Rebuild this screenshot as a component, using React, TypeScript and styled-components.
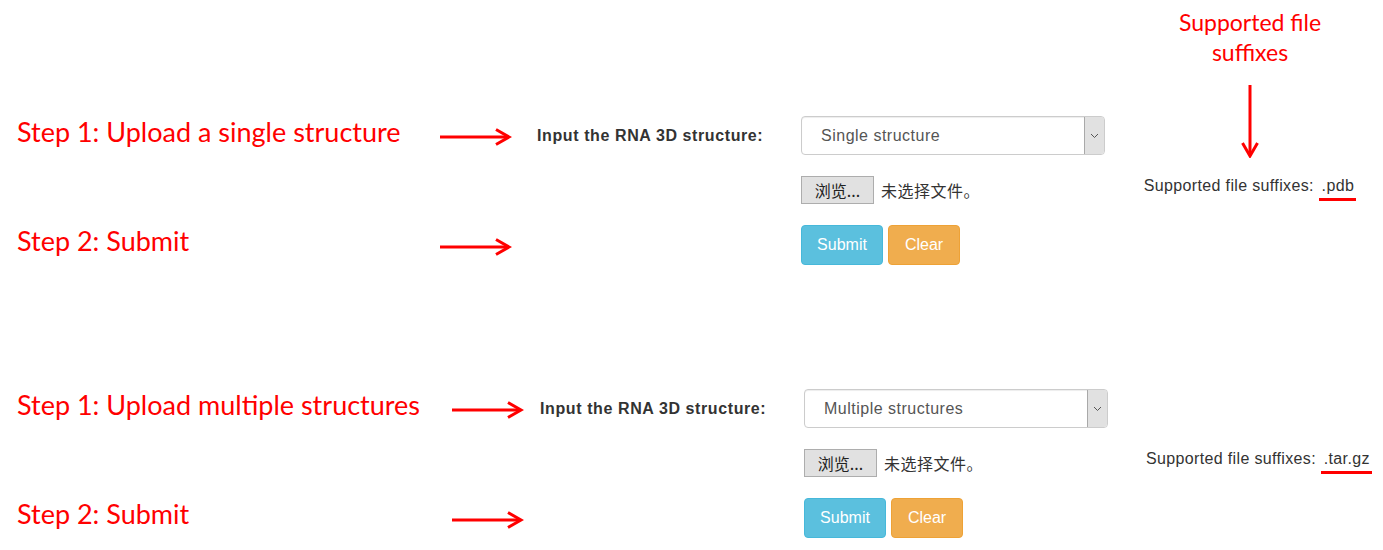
import React from "react";
import styled, { createGlobalStyle } from "styled-components";

const GlobalStyle = createGlobalStyle`
  body {
    margin: 0;
    background: #ffffff;
    font-family: "Liberation Sans", Arial, sans-serif;
  }
`;

const Page = styled.div`
  width: 1383px;
  height: 550px;
  overflow: hidden;
  display: flex;
  flex-direction: column;
`;

const Panel = styled.div<{ $cols: string; $top: number; $header?: boolean }>`
  display: grid;
  grid-template-columns: ${(p) => p.$cols};
  grid-template-rows: ${(p) => (p.$header ? "95px 39px 28px 40px" : "39px 28px 40px")};
  row-gap: 21px;
  padding-left: 17px;
  margin-top: ${(p) => p.$top}px;
  align-items: center;
`;

const Note = styled.div`
  font-family: Lato, "Open Sans", sans-serif;
  color: #ff0000;
  font-size: 27px;
  white-space: nowrap;
`;

const StepNote = styled(Note)<{ $row: number; $shift: number }>`
  grid-column: 1;
  grid-row: ${(p) => p.$row};
  margin-top: ${(p) => p.$shift}px;
`;

const ArrowCell = styled.div<{ $row: number }>`
  grid-column: 2;
  grid-row: ${(p) => p.$row};
  display: flex;
  align-items: center;
  margin-top: 3px;
`;

const Label = styled.div<{ $row: number }>`
  grid-column: 3;
  grid-row: ${(p) => p.$row};
  font-weight: bold;
  font-size: 16px;
  letter-spacing: 0.6px;
  color: #333;
  white-space: nowrap;
`;

const Control = styled.div<{ $row: number }>`
  grid-column: 4;
  grid-row: ${(p) => p.$row};
  display: flex;
  align-items: center;
  gap: 7px;
  height: 100%;
`;

const Select = styled.div`
  width: 304px;
  height: 39px;
  box-sizing: border-box;
  border: 1px solid #cccccc;
  border-radius: 4px;
  box-shadow: inset 0 1px 1px rgba(0, 0, 0, 0.075);
  display: flex;
  align-items: stretch;
  overflow: hidden;
`;

const SelectText = styled.div`
  flex: 1;
  display: flex;
  align-items: center;
  padding-left: 19px;
  font-size: 16px;
  letter-spacing: 0.5px;
  color: #555555;
`;

const SelectButton = styled.div`
  width: 19px;
  background: #e1e1e1;
  border-left: 1px solid #a9a9a9;
  display: flex;
  align-items: center;
  justify-content: center;
`;

const FileButton = styled.div`
  width: 73px;
  height: 28px;
  box-sizing: border-box;
  background: #e1e1e1;
  border: 1px solid #adadad;
  display: flex;
  align-items: center;
  justify-content: center;
  font-family: "Noto Sans CJK SC", sans-serif;
  font-size: 16px;
  color: #222;
`;

const FileText = styled.span`
  font-family: "Noto Sans CJK SC", sans-serif;
  font-size: 16px;
  letter-spacing: 0.5px;
  color: #333;
`;

const Button = styled.div<{ $bg: string; $border: string; $w: number }>`
  width: ${(p) => p.$w}px;
  height: 40px;
  box-sizing: border-box;
  background: ${(p) => p.$bg};
  border: 1px solid ${(p) => p.$border};
  border-radius: 4px;
  color: #ffffff;
  font-size: 16px;
  display: flex;
  align-items: center;
  justify-content: center;
`;

const Buttons = styled.div`
  display: flex;
  gap: 5px;
  align-self: stretch;
  align-items: center;
`;

const Callout = styled.div`
  grid-column: 5;
  grid-row: 1 / span 3;
  align-self: stretch;
  display: flex;
  flex-direction: column;
  align-items: center;
  justify-content: flex-end;
  width: 214px;
`;

const CalloutText = styled(Note)`
  font-size: 23px;
  line-height: 30px;
  text-align: center;
`;

const Suffix = styled.div<{ $row?: number }>`
  grid-column: 5;
  grid-row: ${(p) => p.$row ?? "auto"};
  font-size: 16px;
  letter-spacing: 0.35px;
  line-height: 20px;
  color: #333;
  white-space: nowrap;
  margin-bottom: 8px;
`;

const Ext = styled.span`
  border-bottom: 3px solid #ff0000;
  padding: 0 2px 4px 3px;
`;

const RightArrow = () => (
  <svg width="72" height="18" viewBox="0 0 72 18">
    <line x1="0" y1="9" x2="68" y2="9" stroke="#ff0000" strokeWidth="3" />
    <polyline points="56,1.5 69,9 56,16.5" fill="none" stroke="#ff0000" strokeWidth="3" />
  </svg>
);

const DownArrow = () => (
  <svg width="18" height="73" viewBox="0 0 18 73" style={{ margin: "18px 0 18px" }}>
    <line x1="9" y1="0" x2="9" y2="70" stroke="#ff0000" strokeWidth="3" />
    <polyline points="1.5,58 9,71 16.5,58" fill="none" stroke="#ff0000" strokeWidth="3" />
  </svg>
);

const Chevron = () => (
  <svg width="9" height="6" viewBox="0 0 9 6">
    <polyline points="1,1 4.5,4.5 8,1" fill="none" stroke="#555" strokeWidth="1" />
  </svg>
);

interface FormProps {
  option: string;
  first: number;
}

const FormRows: React.FC<FormProps> = ({ option, first }) => (
  <>
    <ArrowCell $row={first}>
      <RightArrow />
    </ArrowCell>
    <Label $row={first}>Input the RNA 3D structure:</Label>
    <Control $row={first}>
      <Select>
        <SelectText>{option}</SelectText>
        <SelectButton>
          <Chevron />
        </SelectButton>
      </Select>
    </Control>
    <Control $row={first + 1}>
      <FileButton>浏览...</FileButton>
      <FileText>未选择文件。</FileText>
    </Control>
    <ArrowCell $row={first + 2}>
      <RightArrow />
    </ArrowCell>
    <Control $row={first + 2}>
      <Buttons>
        <Button $bg="#5bc0de" $border="#46b8da" $w={82}>Submit</Button>
        <Button $bg="#f0ad4e" $border="#eea236" $w={72}>Clear</Button>
      </Buttons>
    </Control>
  </>
);

export default function App() {
  return (
    <Page>
      <GlobalStyle />
      <Panel $cols="423px 97px 264px 342px 214px" $top={0} $header>
        <StepNote $row={2} $shift={-8}>Step 1: Upload a single structure</StepNote>
        <StepNote $row={4} $shift={-10}>Step 2: Submit</StepNote>
        <FormRows option="Single structure" first={2} />
        <Callout>
          <CalloutText>
            Supported file
            <br />
            suffixes
          </CalloutText>
          <DownArrow />
          <Suffix>
            Supported file suffixes: <Ext>.pdb</Ext>
          </Suffix>
        </Callout>
      </Panel>
      <Panel $cols="435px 88px 264px 342px 240px" $top={124}>
        <StepNote $row={1} $shift={-8}>Step 1: Upload multiple structures</StepNote>
        <StepNote $row={3} $shift={-10}>Step 2: Submit</StepNote>
        <FormRows option="Multiple structures" first={1} />
        <Suffix $row={2}>
          Supported file suffixes: <Ext>.tar.gz</Ext>
        </Suffix>
      </Panel>
    </Page>
  );
}
